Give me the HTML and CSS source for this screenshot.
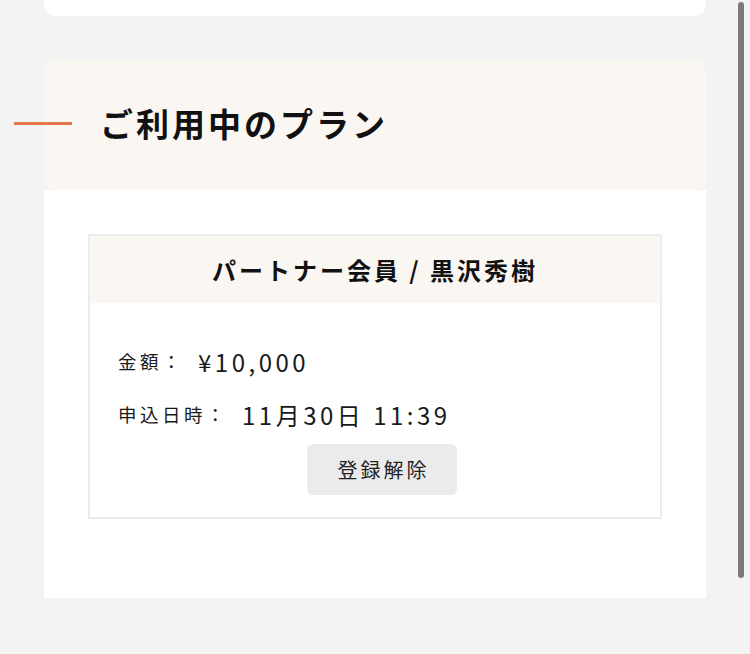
FILE: index.html
```html
<!DOCTYPE html>
<html lang="ja">
<head>
<meta charset="utf-8">
<title>ご利用中のプラン</title>
<link rel="stylesheet" href="styles.css">
</head>
<body>
<div class="page">
  <div class="top-card"></div>
  <section class="plan">
    <header class="plan-head">
      <span class="accent"></span>
      <h1 class="plan-title">ご利用中のプラン</h1>
    </header>
    <div class="plan-body">
      <div class="card">
        <div class="card-head">パートナー会員 / 黒沢秀樹</div>
        <div class="card-body">
          <div class="row"><span class="label">金額：</span><span class="value">¥10,000</span></div>
          <div class="row row2"><span class="label">申込日時：</span><span class="value">11月30日 11:39</span></div>
          <button class="btn" type="button">登録解除</button>
        </div>
      </div>
    </div>
  </section>
</div>
<div class="scrollbar"></div>
</body>
</html>
```

FILE: styles.css
```css
html, body {
  margin: 0;
  padding: 0;
  background: #f3f3f3;
  height: 100%;
  overflow: hidden;
}
body {
  font-family: "Noto Sans CJK JP", "Noto Sans", sans-serif;
  color: #151515;
}
.page {
  width: 662px;
  margin-left: 44px;
  display: flex;
  flex-direction: column;
}
.top-card {
  height: 16px;
  background: #ffffff;
  border-radius: 0 0 12px 12px;
}
.plan {
  margin-top: 44px;
  display: flex;
  flex-direction: column;
}
.plan-head {
  height: 130px;
  padding-bottom: 3px;
  box-sizing: border-box;
  background: #faf6f2;
  border-radius: 12px;
  display: flex;
  align-items: center;
  gap: 30px;
}
.accent {
  width: 58px;
  height: 3px;
  margin-left: -30px;
  background: #e5784c;
  flex: none;
}
.plan-title {
  margin: 0 0 0 -2px;
  font-size: 33px;
  font-weight: 700;
  letter-spacing: 3px;
  line-height: 1;
  color: #111;
}
.plan-body {
  background: #ffffff;
  padding: 44px 44px 79px;
}
.card {
  border: 2px solid #ececec;
  display: flex;
  flex-direction: column;
}
.card-head {
  height: 67px;
  background: #faf6f2;
  display: flex;
  align-items: center;
  justify-content: center;
  font-size: 24px;
  font-weight: 700;
  letter-spacing: 3px;
  color: #111;
}
.card-body {
  padding: 40px 14px 22px 28px;
  display: flex;
  flex-direction: column;
}
.row {
  height: 36px;
  display: flex;
  align-items: center;
}
.row2 {
  margin-top: 17px;
}
.label {
  font-size: 18.5px;
  letter-spacing: 3.5px;
  margin-right: 14px;
  color: #1a1a1a;
}
.value {
  font-size: 24px;
  letter-spacing: 3.5px;
  color: #1a1a1a;
}
.btn {
  margin: 12px auto 0;
  width: 150px;
  height: 51px;
  border: none;
  border-radius: 6px;
  background: #ebebeb;
  font-family: "Noto Sans CJK JP", "Noto Sans", sans-serif;
  font-size: 20px;
  letter-spacing: 3px;
  text-indent: 3px;
  color: #222;
  padding: 0;
}
.scrollbar {
  position: fixed;
  top: 2px;
  right: 6px;
  width: 6px;
  height: 576px;
  border-radius: 3px;
  background: #7b7b7b;
}
```
